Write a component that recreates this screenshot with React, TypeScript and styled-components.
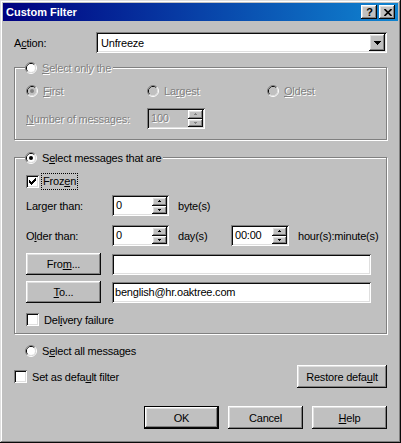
import React from 'react';
import styled, { createGlobalStyle, css } from 'styled-components';

const FACE = '#c0c0c0';

const GlobalStyle = createGlobalStyle`
  html, body { margin: 0; padding: 0; background: ${FACE}; }
  * { box-sizing: border-box; }
`;

const raised = css`
  box-shadow: inset -1px -1px #0a0a0a, inset 1px 1px #ffffff, inset -2px -2px #808080, inset 2px 2px #dfdfdf;
`;
const sunken = css`
  box-shadow: inset 1px 1px #808080, inset -1px -1px #ffffff, inset 2px 2px #0a0a0a, inset -2px -2px #dfdfdf;
`;

const Window = styled.div`
  width: 401px;
  height: 443px;
  background: ${FACE};
  padding: 3px;
  display: flex;
  flex-direction: column;
  color: #000;
  font-family: "Liberation Sans", Arial, sans-serif;
  font-size: 11px;
  letter-spacing: -0.2px;
  box-shadow: inset -1px -1px #0a0a0a, inset 1px 1px #dfdfdf, inset -2px -2px #808080, inset 2px 2px #ffffff;
`;

const TitleBar = styled.div`
  height: 18px;
  flex: none;
  display: flex;
  align-items: center;
  padding: 0 3px 0 3px;
  background: linear-gradient(90deg, #000080, #1084d0);
  color: #fff;
  font-weight: bold;
  letter-spacing: 0;
`;

const TitleText = styled.span`
  flex: 1;
`;

const TitleButtons = styled.div`
  display: flex;
  gap: 2px;
`;

const TitleButton = styled.div`
  width: 16px;
  height: 14px;
  background: ${FACE};
  ${raised};
  display: flex;
  align-items: center;
  justify-content: center;
  color: #000;
  font-size: 11px;
  font-weight: bold;
  line-height: 14px;
  padding-left: 1px;
`;

const Body = styled.div`
  flex: 1;
  display: flex;
  flex-direction: column;
  padding: 11px 11px 0 11px;
`;

const Row = styled.div<{ $mt?: number; $h?: number }>`
  display: flex;
  align-items: center;
  margin-top: ${p => p.$mt ?? 0}px;
  height: ${p => p.$h ?? 13}px;
  flex: none;
`;

const disabledText = css`
  color: #808080;
  text-shadow: 1px 1px 0 #ffffff;
`;

const FieldLabel = styled.span<{ $w: number; $disabled?: boolean }>`
  width: ${p => p.$w}px;
  flex: none;
  white-space: nowrap;
  ${p => p.$disabled && disabledText};
`;

const Combo = styled.div`
  flex: 1;
  height: 21px;
  background: #fff;
  ${sunken};
  padding: 2px;
  display: flex;
  align-items: center;
`;

const ComboText = styled.span`
  flex: 1;
  padding-left: 3px;
`;

const DropButton = styled.div`
  width: 16px;
  height: 17px;
  background: ${FACE};
  ${raised};
  display: flex;
  align-items: center;
  justify-content: center;
`;

const Group = styled.fieldset<{ $mt: number; $pt: number; $pb: number }>`
  margin: ${p => p.$mt}px 0 0 0;
  padding: ${p => p.$pt}px 15px ${p => p.$pb}px 11px;
  border: 1px solid #808080;
  box-shadow: inset 1px 1px 0 #ffffff, 1px 1px 0 #ffffff;
  min-width: 0;
  flex: none;
`;

const Legend = styled.legend`
  padding: 0 2px 0 0;
  margin-left: -1px;
  height: 13px;
  background: ${FACE};
`;

const Choice = styled.label<{ $disabled?: boolean; $gap?: number }>`
  display: inline-flex;
  align-items: center;
  gap: ${p => p.$gap ?? 5}px;
  height: 13px;
  white-space: nowrap;
  ${p => p.$disabled && css`& > span:last-child { ${disabledText}; }`}
`;

const OnlyGrid = styled.div`
  display: grid;
  grid-template-columns: 121px 120px 1fr;
  grid-template-rows: 13px 21px;
  row-gap: 11px;
  align-items: center;
`;

const Box = styled.span`
  width: 13px;
  height: 13px;
  flex: none;
  background: #fff;
  ${sunken};
  display: flex;
  align-items: center;
  justify-content: center;
`;

const FocusText = styled.span`
  outline: 1px dotted #000;
  outline-offset: 0;
  padding: 1px;
  margin-left: -2px;
  line-height: 13px;
`;

const Spin = styled.div<{ $w: number; $disabled?: boolean }>`
  width: ${p => p.$w}px;
  height: 21px;
  flex: none;
  padding: 2px;
  display: flex;
  background: ${p => (p.$disabled ? FACE : '#fff')};
  ${sunken};
`;

const SpinText = styled.span<{ $disabled?: boolean }>`
  flex: 1;
  padding-left: 2px;
  line-height: 17px;
  ${p => p.$disabled && disabledText};
`;

const SpinButtons = styled.div`
  width: 15px;
  display: flex;
  flex-direction: column;
`;

const SpinButton = styled.div`
  flex: 1;
  background: ${FACE};
  ${raised};
  display: flex;
  align-items: center;
  justify-content: center;
`;

const Unit = styled.span<{ $w?: number }>`
  margin-left: 9px;
  white-space: nowrap;
  width: ${p => (p.$w ? `${p.$w}px` : 'auto')};
  flex: none;
`;

const PushButton = styled.div<{ $w: number; $h?: number; $default?: boolean }>`
  width: ${p => p.$w}px;
  height: ${p => p.$h ?? 23}px;
  flex: none;
  display: flex;
  align-items: center;
  justify-content: center;
  background: ${FACE};
  ${raised};
  ${p =>
    p.$default &&
    css`
      box-shadow: inset 0 0 0 1px #000, inset -2px -2px #0a0a0a, inset 2px 2px #ffffff,
        inset -3px -3px #808080, inset 3px 3px #dfdfdf;
    `}
`;

const TextField = styled.div`
  flex: none;
  width: 259px;
  height: 21px;
  margin-left: 11px;
  background: #fff;
  ${sunken};
  padding: 2px 3px;
  line-height: 17px;
  white-space: nowrap;
`;

const Spacer = styled.div`
  flex: 1;
`;

const ButtonRow = styled.div`
  display: flex;
  justify-content: flex-end;
  gap: 9px;
  margin-top: 18px;
`;

const Indent = styled.div`
  padding-left: 11px;
`;

const U = styled.span`
  text-decoration: underline;
  text-underline-offset: 1px;
`;

const Mn: React.FC<{ t: string; at: number }> = ({ t, at }) => (
  <>
    {t.slice(0, at)}
    <U>{t[at]}</U>
    {t.slice(at + 1)}
  </>
);

const RadioIcon: React.FC<{ checked?: boolean; disabled?: boolean; grayFill?: boolean }> = ({
  checked,
  disabled,
  grayFill,
}) => (
  <svg width="12" height="12" viewBox="0 0 12 12" style={{ flex: 'none' }}>
    <path d="M2.11 9.89A5.5 5.5 0 0 1 9.89 2.11" stroke="#808080" fill="none" />
    <path d="M9.89 2.11A5.5 5.5 0 0 1 2.11 9.89" stroke="#ffffff" fill="none" />
    <path d="M2.82 9.18A4.5 4.5 0 0 1 9.18 2.82" stroke="#0a0a0a" fill="none" />
    <path d="M9.18 2.82A4.5 4.5 0 0 1 2.82 9.18" stroke="#dfdfdf" fill="none" />
    <circle cx="6" cy="6" r="4" fill={grayFill ? FACE : '#ffffff'} />
    {checked && <circle cx="6" cy="6" r="2" fill={disabled ? '#808080' : '#000'} />}
  </svg>
);

const CheckMark = () => (
  <svg width="7" height="7" viewBox="0 0 7 7" shapeRendering="crispEdges">
    {[2, 3, 4, 3, 2, 1, 0].map((y, x) => (
      <rect key={x} x={x} y={y} width="1" height="3" fill="#000" />
    ))}
  </svg>
);

const Tri: React.FC<{ up?: boolean; w: number; h: number; color?: string }> = ({ up, w, h, color }) => (
  <svg width={w} height={h} viewBox={`0 0 ${w} ${h}`} shapeRendering="crispEdges">
    <polygon points={up ? `0,${h} ${w},${h} ${w / 2},0` : `0,0 ${w},0 ${w / 2},${h}`} fill={color ?? '#000'} />
  </svg>
);

const SpinBox: React.FC<{ w: number; value: string; disabled?: boolean }> = ({ w, value, disabled }) => (
  <Spin $w={w} $disabled={disabled}>
    <SpinText $disabled={disabled}>{value}</SpinText>
    <SpinButtons>
      <SpinButton>
        <Tri up w={3} h={2} color={disabled ? '#808080' : '#000'} />
      </SpinButton>
      <SpinButton>
        <Tri w={3} h={2} color={disabled ? '#808080' : '#000'} />
      </SpinButton>
    </SpinButtons>
  </Spin>
);

export default function App() {
  return (
    <>
      <GlobalStyle />
      <Window>
        <TitleBar>
          <TitleText>Custom Filter</TitleText>
          <TitleButtons>
            <TitleButton>?</TitleButton>
            <TitleButton>
              <svg width="8" height="7" viewBox="0 0 8 7">
                <path d="M0.5 0 L7.5 7 M7.5 0 L0.5 7" stroke="#000" strokeWidth="1.6" />
              </svg>
            </TitleButton>
          </TitleButtons>
        </TitleBar>

        <Body>
          <Row $h={21}>
            <FieldLabel $w={82}>
              <Mn t="Action:" at={1} />
            </FieldLabel>
            <Combo>
              <ComboText>Unfreeze</ComboText>
              <DropButton>
                <Tri w={7} h={4} />
              </DropButton>
            </Combo>
          </Row>

          <Group $mt={8} $pt={10} $pb={10}>
            <Legend>
              <Choice $disabled>
                <RadioIcon />
                <span>
                  <Mn t="Select only the" at={0} />
                </span>
              </Choice>
            </Legend>
            <OnlyGrid>
              <Choice $disabled>
                <RadioIcon checked disabled grayFill />
                <span>
                  <Mn t="First" at={0} />
                </span>
              </Choice>
              <Choice $disabled>
                <RadioIcon grayFill />
                <span>
                  <Mn t="Largest" at={2} />
                </span>
              </Choice>
              <Choice $disabled>
                <RadioIcon grayFill />
                <span>
                  <Mn t="Oldest" at={0} />
                </span>
              </Choice>
              <FieldLabel $w={121} $disabled>
                <Mn t="Number of messages:" at={0} />
              </FieldLabel>
              <SpinBox w={58} value="100" disabled />
            </OnlyGrid>
          </Group>

          <Group $mt={11} $pt={11} $pb={7}>
            <Legend>
              <Choice>
                <RadioIcon checked />
                <span>
                  <Mn t="Select messages that are" at={1} />
                </span>
              </Choice>
            </Legend>
            <Row>
              <Choice>
                <Box>
                  <CheckMark />
                </Box>
                <FocusText>
                  <Mn t="Frozen" at={4} />
                </FocusText>
              </Choice>
            </Row>
            <Row $mt={7} $h={21}>
              <FieldLabel $w={86}>Larger than:</FieldLabel>
              <SpinBox w={57} value="0" />
              <Unit>byte(s)</Unit>
            </Row>
            <Row $mt={9} $h={21}>
              <FieldLabel $w={86}>
                <Mn t="Older than:" at={1} />
              </FieldLabel>
              <SpinBox w={57} value="0" />
              <Unit $w={53}>day(s)</Unit>
              <SpinBox w={58} value="00:00" />
              <Unit>hour(s):minute(s)</Unit>
            </Row>
            <Row $mt={7} $h={22}>
              <PushButton $w={75} $h={22}>
                <span>
                  <Mn t="From..." at={3} />
                </span>
              </PushButton>
              <TextField />
            </Row>
            <Row $mt={6} $h={22}>
              <PushButton $w={75} $h={22}>
                <span>
                  <Mn t="To..." at={0} />
                </span>
              </PushButton>
              <TextField>benglish@hr.oaktree.com</TextField>
            </Row>
            <Row $mt={10}>
              <Choice>
                <Box />
                <span>
                  <Mn t="Delivery failure" at={3} />
                </span>
              </Choice>
            </Row>
          </Group>

          <Indent>
            <Row $mt={10}>
              <Choice>
                <RadioIcon />
                <span>
                  <Mn t="Select all messages" at={1} />
                </span>
              </Choice>
            </Row>
          </Indent>

          <Row $mt={8} $h={23}>
            <Choice>
              <Box />
              <span>
                <Mn t="Set as default filter" at={11} />
              </span>
            </Choice>
            <Spacer />
            <PushButton $w={90}>
              <span>
                <Mn t="Restore default" at={12} />
              </span>
            </PushButton>
          </Row>

          <ButtonRow>
            <PushButton $w={75} $default>
              OK
            </PushButton>
            <PushButton $w={75}>Cancel</PushButton>
            <PushButton $w={75}>
              <span>
                <Mn t="Help" at={0} />
              </span>
            </PushButton>
          </ButtonRow>
        </Body>
      </Window>
    </>
  );
}
